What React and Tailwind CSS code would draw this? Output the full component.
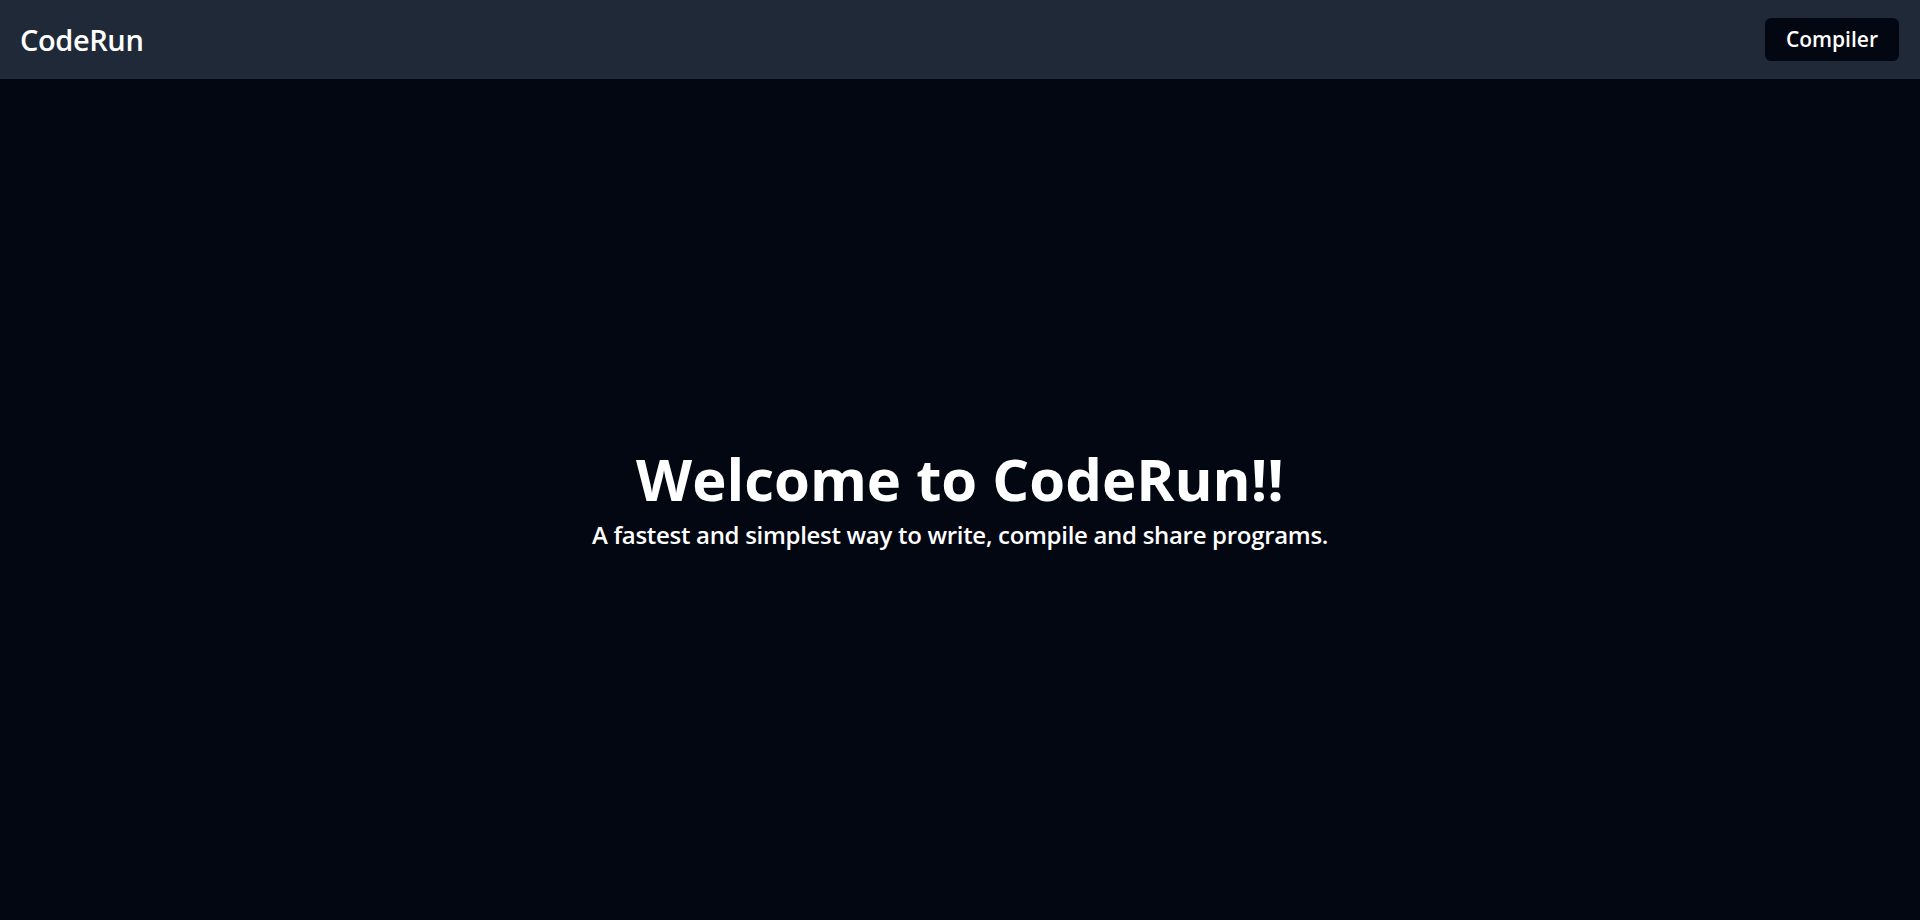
import React from "react";

const App = () => {
  return (
    <div className="min-h-screen flex flex-col bg-[#030712] text-white font-['Open_Sans',sans-serif]">
      {/* Navbar */}
      <nav className="h-[79px] shrink-0 flex items-center justify-between pl-[20px] pr-[21px] bg-[#1f2937]">
        <a href="#" className="text-[29px] font-semibold tracking-[-0.4px]">
          CodeRun
        </a>
        <button className="h-[43px] px-[21px] rounded-md bg-[#030712] text-[21px] font-semibold">
          Compiler
        </button>
      </nav>

      {/* Hero */}
      <main className="flex-1 flex flex-col items-center justify-center pt-[4px]">
        <h1 className="text-[58px] leading-none font-bold">
          Welcome to CodeRun!!
        </h1>
        <p className="mt-[9px] text-[24px] font-semibold tracking-[-0.3px]">
          A fastest and simplest way to write, compile and share programs.
        </p>
      </main>
    </div>
  );
};

export default App;
